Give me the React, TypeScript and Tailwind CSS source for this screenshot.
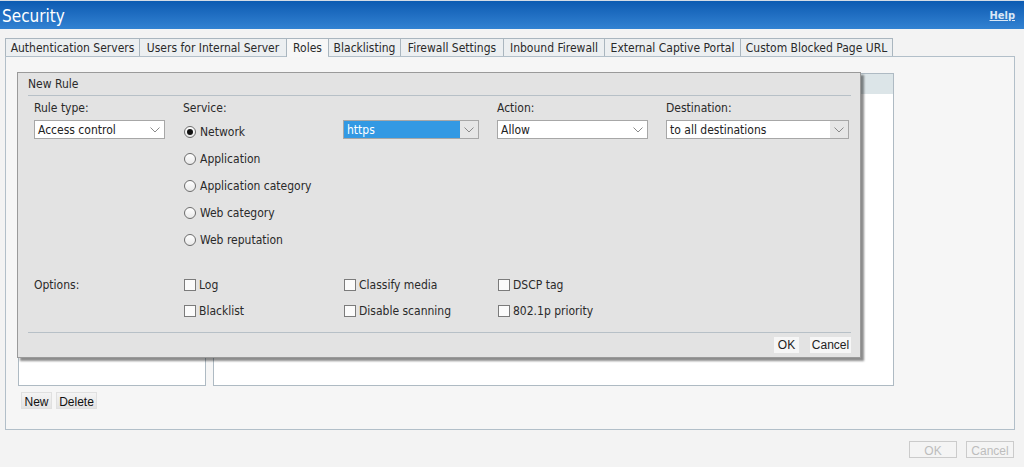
import React from "react";

const tabs = [
  { label: "Authentication Servers", w: "w-[134px]" },
  { label: "Users for Internal Server", w: "w-[147px]" },
  { label: "Roles", w: "w-[42px]", active: true },
  { label: "Blacklisting", w: "w-[72px]" },
  { label: "Firewall Settings", w: "w-[103px]" },
  { label: "Inbound Firewall", w: "w-[101px]" },
  { label: "External Captive Portal", w: "w-[136px]" },
  { label: "Custom Blocked Page URL", w: "w-[153px]" },
];

const services = ["Network", "Application", "Application category", "Web category", "Web reputation"];

const Chevron: React.FC = () => (
  <svg width="10" height="6" viewBox="0 0 10 6" className="shrink-0">
    <path d="M0.5 0.5 L5 5 L9.5 0.5" fill="none" stroke="#8a8a8a" strokeWidth="1" />
  </svg>
);

// fake native select box
const Select: React.FC<{ value: string; className: string; selected?: boolean; greyArrow?: boolean }> = ({
  value,
  className,
  selected,
  greyArrow,
}) => (
  <div className={`h-[19px] border border-[#a7a7a7] bg-white flex ${className}`}>
    <div
      className={`flex-1 flex items-center pl-[3px] ${selected ? "bg-[#3399e3] text-white" : "text-[#222]"}`}
    >
      {value}
    </div>
    <div className={`w-[18px] flex items-center justify-center ${greyArrow ? "bg-[#e6e6e6]" : "bg-white"}`}>
      <Chevron />
    </div>
  </div>
);

const Radio: React.FC<{ label: string; checked?: boolean }> = ({ label, checked }) => (
  <div className="h-[27px] flex items-center gap-[4px] pl-[1px]">
    <span className="w-[12px] h-[12px] rounded-full border border-[#6d6d6d] bg-gradient-to-b from-white to-[#e9e9e9] flex items-center justify-center">
      {checked && <span className="w-[6px] h-[6px] rounded-full bg-[#111]" />}
    </span>
    <span>{label}</span>
  </div>
);

const Check: React.FC<{ label: string }> = ({ label }) => (
  <div className="h-[26px] flex items-center gap-[3px] pl-[1px]">
    <span className="w-[12px] h-[12px] border border-[#7b7b7b] bg-[#fbfbfb]" />
    <span>{label}</span>
  </div>
);

const NewRuleDialog: React.FC = () => (
  <div className="absolute left-[17px] top-[72px] w-[844px] h-[286px] border border-[#9a9a9a] bg-[#e3e3e3] shadow-[3px_3px_2px_rgba(0,0,0,0.45)] flex flex-col">
    <div className="h-[22px] pl-[10px] flex items-center">New Rule</div>
    <div className="ml-[10px] mr-[9px] h-px bg-[#b7c0c7]" />

    <div className="pl-[16px] pt-[5px] flex">
      <div className="w-[149px]">
        <div className="h-[14px] leading-[14px]">Rule type:</div>
        <Select value="Access control" className="mt-[5px] w-[131px]" />
      </div>
      <div className="w-[160px]">
        <div className="h-[14px] leading-[14px]">Service:</div>
        <div className="mt-[3px]">
          {services.map((s, i) => (
            <Radio key={s} label={s} checked={i === 0} />
          ))}
        </div>
      </div>
      <div className="w-[154px]">
        <div className="h-[14px]" />
        <Select value="https" className="mt-[5px] w-[136px]" selected greyArrow />
      </div>
      <div className="w-[169px]">
        <div className="h-[14px] leading-[14px]">Action:</div>
        <Select value="Allow" className="mt-[5px] w-[151px]" />
      </div>
      <div>
        <div className="h-[14px] leading-[14px]">Destination:</div>
        <Select value="to all destinations" className="mt-[5px] w-[183px]" greyArrow />
      </div>
    </div>

    <div className="pl-[16px] mt-[19px] flex">
      <div className="w-[149px] h-[26px] flex items-center">Options:</div>
      <div className="w-[160px]">
        <Check label="Log" />
        <Check label="Blacklist" />
      </div>
      <div className="w-[154px]">
        <Check label="Classify media" />
        <Check label="Disable scanning" />
      </div>
      <div>
        <Check label="DSCP tag" />
        <Check label="802.1p priority" />
      </div>
    </div>

    <div className="mt-[8px] ml-[10px] mr-[9px] h-px bg-[#b7c0c7]" />
    <div className="mt-[4px] pr-[9px] flex justify-end gap-[11px] font-['Liberation_Sans',Arial,sans-serif] text-[12px]">
      <button className="h-[16px] w-[25px] bg-[#f6f6f6] text-[#222] leading-[16px]">OK</button>
      <button className="h-[16px] w-[41px] bg-[#f6f6f6] text-[#222] leading-[16px]">Cancel</button>
    </div>
  </div>
);

export default function App() {
  return (
    <div className="relative w-[1024px] h-[467px] overflow-hidden bg-[#f3f3f3] text-[12px] text-[#2a2a2a] font-['DejaVu_Sans_Condensed','DejaVu_Sans',Tahoma,sans-serif]">
      {/* title bar */}
      <div className="h-[29px] pt-[3px] border-t border-[#d3dce6] bg-gradient-to-b from-[#0b5bb2] to-[#3282d2] flex items-center justify-between pl-[2px] pr-[9px]">
        <h1 className="text-[17px] text-white leading-none">Security</h1>
        <a className="text-[11px] font-bold underline text-[#d9e7f6]">Help</a>
      </div>

      {/* tabs */}
      <div className="mt-[9px] ml-[5px] flex h-[18px]">
        {tabs.map((t, i) => (
          <div
            key={t.label}
            className={`${t.w} flex items-center justify-center border-t border-l border-[#aab6bf] ${
              i === tabs.length - 1 ? "border-r" : ""
            } ${t.active ? "h-[19px] bg-[#f7f7f7] relative z-10" : "h-[18px] bg-[#eceff1]"}`}
          >
            {t.label}
          </div>
        ))}
      </div>

      {/* tab body */}
      <div className="ml-[5px] w-[1010px] h-[374px] border border-[#b2bfc9] bg-[#f6f6f6] pl-[12px] pt-[16px]">
        <div className="flex gap-[7px]">
          <div className="w-[188px] h-[313px] border border-[#aebac3] bg-white">
            <div className="h-[20px] bg-[#dce5e8]" />
          </div>
          <div className="w-[681px] h-[313px] border border-[#aebac3] bg-white">
            <div className="h-[20px] bg-[#dce5e8]" />
          </div>
        </div>
        <div className="mt-[6px] pl-[3px] flex gap-[4px] font-['Liberation_Sans',Arial,sans-serif] text-[12px] text-[#111]">
          <button className="h-[17px] w-[31px] border border-[#e0e0e0] bg-gradient-to-b from-[#f4f4f4] to-[#e4e4e4]">New</button>
          <button className="h-[17px] w-[41px] border border-[#e0e0e0] bg-gradient-to-b from-[#f4f4f4] to-[#e4e4e4]">Delete</button>
        </div>
      </div>

      {/* footer buttons */}
      <div className="mt-[11px] pr-[10px] flex justify-end gap-[9px] font-['Liberation_Sans',Arial,sans-serif] text-[12px] text-[#bdbdbd]">
        <button className="h-[17px] w-[48px] border border-[#cbcbcb] bg-[#f4f4f4]">OK</button>
        <button className="h-[17px] w-[48px] border border-[#cbcbcb] bg-[#f4f4f4]">Cancel</button>
      </div>

      <NewRuleDialog />
    </div>
  );
}
